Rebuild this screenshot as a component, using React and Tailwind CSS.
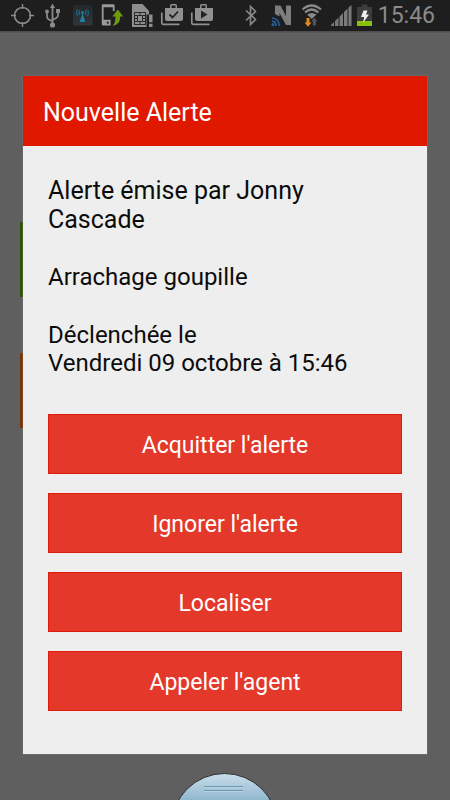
import React from "react";

function StatusIcon({ label, width = 30, children }) {
  return (
    <svg
      role="img"
      aria-label={label}
      width={width}
      height="31"
      viewBox={`0 0 ${width} 31`}
      className="shrink-0"
      fill="none"
    >
      {children}
    </svg>
  );
}

const GREY = "#8a8a8a";

function LocationIcon() {
  return (
    <StatusIcon label="Position">
      <circle cx="15.5" cy="15.5" r="8" stroke={GREY} strokeWidth="1.6" />
      <path d="M15.5 4v5M15.5 22v5M4 15.5h5M22 15.5h5" stroke={GREY} strokeWidth="1.4" />
    </StatusIcon>
  );
}

function UsbIcon() {
  return (
    <StatusIcon label="USB">
      <path d="M15.5 8v15M15.5 21c-3.500-.8-5.500-2-5.500-4.500V13M15.500 19.500c3.500-.8 5.500-2 5.500-4.500v-3" stroke={GREY} strokeWidth="1.8" />
      <path d="M15.500 3.500l2.600 4.500h-5.200z" fill={GREY} />
      <circle cx="10" cy="11.500" r="2" fill={GREY} />
      <rect x="19" y="9" width="4" height="4" fill={GREY} />
      <circle cx="15.500" cy="25" r="2.600" fill={GREY} />
    </StatusIcon>
  );
}

function AntennaIcon() {
  return (
    <StatusIcon label="Antenne">
      <defs>
        <linearGradient id="antenna-tile" x1="0" y1="0" x2="0" y2="1">
          <stop offset="0" stopColor="#23282c" />
          <stop offset="1" stopColor="#31363a" />
        </linearGradient>
      </defs>
      <rect x="6" y="5" width="19.500" height="20.500" rx="1" fill="url(#antenna-tile)" />
      <path d="M15.500 13l2.800 9h-5.600z" fill="#1c7fa3" />
      <circle cx="15.500" cy="12.500" r="1.500" fill="#1c7fa3" />
      <path d="M12.800 10c-1 1.500-1 3.500 0 5M18.200 10c1 1.500 1 3.500 0 5M10.600 9.500c-1.300 2-1.300 4.500 0 6.500M20.400 9.500c1.300 2 1.300 4.500 0 6.500" stroke="#196684" strokeWidth="1.200" />
    </StatusIcon>
  );
}

function PhoneTransferIcon() {
  return (
    <StatusIcon label="Transfert">
      <path d="M4.800 5.500q0-1.300 1.300-1.300h10.200q1.300 0 1.300 1.300V11h-1.800V7.200H6.600v12.600h7V25.500H6.100q-1.300 0-1.300-1.300z" fill="#999" />
      <circle cx="10.800" cy="22.700" r="1.100" fill="#222" />
      <path d="M20.800 9.500l5.400 7h-3.100c.2 5-2 8.300-7.600 9.300 2.400-2.300 3-5 2.900-9.300h-3z" fill="#6d9a10" />
    </StatusIcon>
  );
}

function SimIcon() {
  return (
    <StatusIcon label="Carte SIM">
      <path d="M5 4h10.500l6.500 7v3.500h-2.500V27H5z" fill="#8e8e8e" />
      <rect x="7.500" y="12.500" width="11" height="12" fill="#8e8e8e" stroke="#282828" strokeWidth="1" />
      <path d="M10.500 15.500h5v6h-5zM7.500 15.500h3M15.500 15.500h3M7.500 18.500h3M15.500 18.500h3M7.500 21.500h3M15.500 21.500h3M13 12.500v3M13 21.500v3" stroke="#282828" strokeWidth="1" />
      <path d="M22 14.500h3.500v7.800H22zM22 23.700h3.500V27H22z" fill="#8e8e8e" />
    </StatusIcon>
  );
}

function BagIcon({ label, children }) {
  return (
    <StatusIcon label={label}>
      <path d="M8 8h5V5.500q0-1.500 1.500-1.500h4q1.500 0 1.500 1.500V8h6v11q0 2-2 2H10q-2 0-2-2zM14.500 8h4V5.500h-4z" fill="#909090" fillRule="evenodd" />
      <path d="M4.800 12.500v10.500q0 1.300 1.300 1.300H22.500" stroke="#909090" strokeWidth="1.700" />
      {children}
    </StatusIcon>
  );
}

function BluetoothIcon() {
  return (
    <StatusIcon label="Bluetooth">
      <path d="M10 10.500l9.500 9-5 5V6.500l5 5-9.500 9" stroke={GREY} strokeWidth="1.600" />
    </StatusIcon>
  );
}

function NfcIcon() {
  return (
    <StatusIcon label="NFC">
      <path d="M9 5.500h5.500l5.500 10.500V5.500H25V25h-5l-6.500-12v3.500L9 14z" fill="#7d7d7d" />
      <circle cx="7" cy="24.700" r="1.600" fill="#235f9c" />
      <path d="M6 21q4 .5 4.300 5M6 18q6.800.5 7.500 8" stroke="#235f9c" strokeWidth="1.700" />
    </StatusIcon>
  );
}

function WifiIcon() {
  return (
    <StatusIcon label="Wi-Fi">
      <path d="M6.500 9.500q9-8 18.500 0M9 12.500q6.500-6 13.500 0" stroke={GREY} strokeWidth="2.200" />
      <path d="M11 14.500q4.700-3 9.500 0l-4.700 4.500z" fill={GREY} />
      <path d="M10.500 18h3v4.500h2L12 26.800l-3.500-4.300h2z" fill="#e58a1c" />
      <path d="M16.800 25.500v-4.200h-1.600l3.100-3.600 3.100 3.600h-1.600v4.200z" fill="#555" />
    </StatusIcon>
  );
}

function SignalIcon() {
  return (
    <StatusIcon label="Signal">
      <path d="M5 26v-1l3-3v4zM9 26v-5l3.500-3.500V26zM13.500 26v-9.500l3.500-3.500v13zM18 26V12l3.500-3.500V26zM22.500 26V7.500l3-2.500v21z" fill="#7a7a7a" />
    </StatusIcon>
  );
}

function BatteryIcon() {
  return (
    <StatusIcon label="Batterie en charge" width={18}>
      <path d="M5.500 4.500h6V7H16v14.500H1V7h4.500z" fill="#3d3d3d" />
      <rect x="1" y="21" width="15" height="5" fill="#89c00c" />
      <path d="M7.500 10.500h4l-1.500 4h3L7 23l1.200-6H5z" fill="#f0f0f0" />
    </StatusIcon>
  );
}

function StatusBar() {
  return (
    <header className="flex h-[31px] items-center justify-between bg-[#1e1e1e] pl-[7px] pr-[15px]">
      <div className="flex">
        <LocationIcon />
        <UsbIcon />
        <AntennaIcon />
        <PhoneTransferIcon />
        <SimIcon />
        <BagIcon label="Applications à jour">
          <path d="M12.500 14.500l3 3 5.500-6" stroke="#242424" strokeWidth="1.800" />
        </BagIcon>
        <BagIcon label="Play Store">
          <path d="M14 10.500v8l6.500-4z" fill="#242424" />
        </BagIcon>
      </div>
      <div className="flex items-center">
        <BluetoothIcon />
        <NfcIcon />
        <WifiIcon />
        <SignalIcon />
        <BatteryIcon />
        <time className="ml-1 text-[23px] leading-[31px] text-[#8a8a8a]">15:46</time>
      </div>
    </header>
  );
}

function DrawerHandle() {
  return (
    <svg
      aria-hidden="true"
      width="96"
      height="28"
      viewBox="0 0 96 28"
      className="absolute bottom-0 left-1/2 -translate-x-1/2"
    >
      <defs>
        <linearGradient id="handle" x1="0" y1="0" x2="0" y2="1">
          <stop offset="0" stopColor="#c9dfea" />
          <stop offset="0.26" stopColor="#8fb6cd" />
        </linearGradient>
      </defs>
      <circle cx="47.5" cy="54.5" r="53" fill="url(#handle)" stroke="#2b2b2b" />
      <path d="M27 14.500h39M27 18.500h39" stroke="#6a9ab3" />
      <path d="M27 15.500h39M27 19.500h39" stroke="#b5d2e0" />
    </svg>
  );
}

const actions = ["Acquitter l'alerte", "Ignorer l'alerte", "Localiser", "Appeler l'agent"];

function AlertDialog() {
  return (
    <section
      role="dialog"
      aria-labelledby="alert-title"
      className="bg-[#eeeeee] shadow-[0_0_1px_#999999]"
    >
      <h1
        id="alert-title"
        className="bg-[#e01800] px-5 pt-[22px] pb-[18px] text-[25px] leading-[30px] text-white"
      >
        Nouvelle Alerte
      </h1>
      <div className="px-[25px] pt-[30px] pb-[43px]">
        <div className="flex flex-col gap-[29px] pr-5 text-[#0c0c0c]">
          <p className="text-[25px] leading-[29px]">Alerte émise par Jonny Cascade</p>
          <p className="text-2xl leading-[29px]">Arrachage goupille</p>
          <p className="text-2xl leading-7">
            Déclenchée le
            <br />
            Vendredi 09 octobre à 15:46
          </p>
        </div>
        <div className="mt-[37px] flex flex-col gap-[19px]">
          {actions.map((label) => (
            <button
              key={label}
              type="button"
              className="h-[60px] w-full border border-[#de1c0c] bg-[#e3382a] pt-1 text-[23px] leading-[30px] text-white"
            >
              {label}
            </button>
          ))}
        </div>
      </div>
    </section>
  );
}

export default function App() {
  return (
    <div className="relative min-h-screen overflow-hidden bg-[#5f5f5f] font-['Roboto','Noto_Sans',sans-serif]">
      <StatusBar />
      <div className="h-[3px] bg-linear-to-b from-[#4a4a4a] to-[#666666]" />
      <main>
        <div aria-hidden="true" className="grid w-1/2 gap-14 px-5 pt-[188px]">
          <div className="h-[75px] bg-[#2c5406]" />
          <div className="h-[75px] bg-[#7a3206]" />
        </div>
        <div className="absolute inset-x-0 top-[76px] px-[23px]">
          <AlertDialog />
        </div>
      </main>
      <DrawerHandle />
    </div>
  );
}
